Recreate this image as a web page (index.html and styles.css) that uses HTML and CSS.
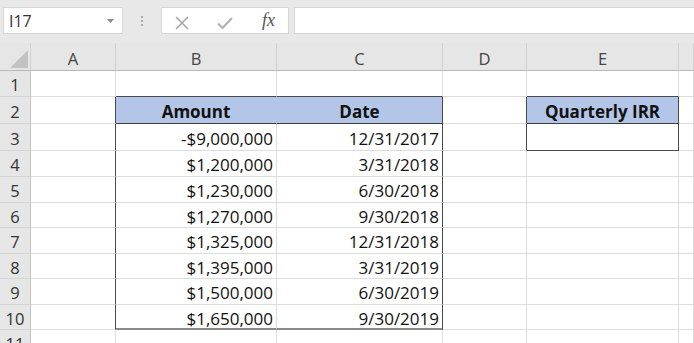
FILE: index.html
```html
<!DOCTYPE html>
<html>
<head>
<meta charset="utf-8">
<link rel="stylesheet" href="styles.css">
</head>
<body>
<div class="app">
  <div class="toolbar">
    <div class="namebox">
      <span class="ref">I17</span>
      <svg class="caret" width="7" height="4" viewBox="0 0 7 4"><path d="M0 0h7L3.5 4z" fill="#8a8a8a"/></svg>
    </div>
    <div class="grip"><i></i><i></i><i></i></div>
    <div class="fxbox">
      <svg class="ico" width="14" height="14" viewBox="0 0 14 14"><path d="M1 1L13 13M13 1L1 13" stroke="#a6a6a6" stroke-width="1.6" fill="none"/></svg>
      <svg class="ico" width="16" height="12" viewBox="0 0 16 12"><path d="M1 6.5L5.5 11L15 1" stroke="#b3b3b3" stroke-width="2.2" fill="none"/></svg>
      <span class="fx">fx</span>
    </div>
    <div class="formula"></div>
  </div>
  <div class="sheet">
    <div class="c corner"><svg width="18" height="18" viewBox="0 0 18 18"><path d="M18 0V18H0z" fill="#c2c2c2"/></svg></div>
    <div class="c hd">A</div><div class="c hd">B</div><div class="c hd">C</div><div class="c hd">D</div><div class="c hd">E</div><div class="c hd"></div>

    <div class="c rh">1</div><div class="c"></div><div class="c bb"></div><div class="c bb"></div><div class="c"></div><div class="c bb"></div><div class="c"></div>

    <div class="c rh">2</div><div class="c br"></div><div class="c th join">Amount</div><div class="c th br">Date</div><div class="c br"></div><div class="c th br">Quarterly IRR</div><div class="c"></div>

    <div class="c rh">3</div><div class="c br"></div><div class="c num">-$9,000,000</div><div class="c num br">12/31/2017</div><div class="c br"></div><div class="c br bb"></div><div class="c"></div>

    <div class="c rh">4</div><div class="c br"></div><div class="c num">$1,200,000</div><div class="c num br">3/31/2018</div><div class="c"></div><div class="c"></div><div class="c"></div>

    <div class="c rh">5</div><div class="c br"></div><div class="c num">$1,230,000</div><div class="c num br">6/30/2018</div><div class="c"></div><div class="c"></div><div class="c"></div>

    <div class="c rh">6</div><div class="c br"></div><div class="c num">$1,270,000</div><div class="c num br">9/30/2018</div><div class="c"></div><div class="c"></div><div class="c"></div>

    <div class="c rh">7</div><div class="c br"></div><div class="c num">$1,325,000</div><div class="c num br">12/31/2018</div><div class="c"></div><div class="c"></div><div class="c"></div>

    <div class="c rh">8</div><div class="c br"></div><div class="c num">$1,395,000</div><div class="c num br">3/31/2019</div><div class="c"></div><div class="c"></div><div class="c"></div>

    <div class="c rh">9</div><div class="c br"></div><div class="c num">$1,500,000</div><div class="c num br">6/30/2019</div><div class="c"></div><div class="c"></div><div class="c"></div>

    <div class="c rh">10</div><div class="c br"></div><div class="c num last">$1,650,000</div><div class="c num br last">9/30/2019</div><div class="c"></div><div class="c"></div><div class="c"></div>

    <div class="c rh">11</div><div class="c"></div><div class="c"></div><div class="c"></div><div class="c"></div><div class="c"></div><div class="c"></div>
  </div>
</div>
</body>
</html>
```

FILE: styles.css
```css
html, body {
  margin: 0;
  padding: 0;
  overflow: hidden;
  background: #ffffff;
}
.app {
  width: 694px;
  height: 343px;
  overflow: hidden;
  font-family: "Open Sans", "Noto Sans", sans-serif;
}
.toolbar {
  height: 43px;
  box-sizing: border-box;
  background: #e8e8e8;
  display: flex;
  align-items: flex-start;
  padding: 7px 0 0 3px;
}
.namebox {
  width: 120px;
  height: 27px;
  box-sizing: border-box;
  background: #fff;
  border: 1px solid #d6d6d6;
  display: flex;
  align-items: center;
  justify-content: space-between;
  padding: 0 8px 0 5px;
}
.ref {
  font-size: 16px;
  color: #333;
}
.caret { margin-top: 1px; }
.grip {
  width: 38px;
  height: 27px;
  display: flex;
  flex-direction: column;
  align-items: center;
  justify-content: center;
  gap: 2px;
}
.grip i {
  display: block;
  width: 2px;
  height: 2px;
  background: #a9a9a9;
}
.fxbox {
  width: 128px;
  height: 27px;
  box-sizing: border-box;
  background: #fff;
  border: 1px solid #d6d6d6;
  display: flex;
  align-items: center;
  padding-left: 13px;
  gap: 28px;
}
.ico { display: block; margin-top: 4px; }
.fx {
  font-family: "Liberation Serif", "DejaVu Serif", serif;
  font-style: italic;
  font-size: 18px;
  color: #555;
  margin-left: 1px;
}
.formula {
  flex: 1;
  height: 27px;
  margin-left: 5px;
  box-sizing: border-box;
  background: #fff;
  border: 1px solid #d6d6d6;
  border-right: none;
}
.sheet {
  display: grid;
  grid-template-columns: 31px 85px 161px 166px 84px 152px 1fr;
  grid-template-rows: 28px 26px 27px 27px 26px 26px 25px 26px 25px 26px 25px 26px;
}
.c {
  box-sizing: border-box;
  border-right: 1px solid #dcdcdc;
  border-bottom: 1px solid #dcdcdc;
  display: flex;
  align-items: center;
  padding: 2px 3px 0 3px;
  font-size: 17px;
  color: #111;
  white-space: nowrap;
  overflow: hidden;
}
.hd {
  background: #e6e6e6;
  justify-content: center;
  color: #444;
  font-size: 16.5px;
  border-right-color: #d2d2d2;
  border-bottom-color: #b8b8b8;
  padding-top: 3px;
}
.corner {
  background: #e6e6e6;
  border-right-color: #d2d2d2;
  border-bottom-color: #b8b8b8;
  justify-content: flex-end;
  align-items: flex-end;
  padding: 0 2px 2px 0;
}
.corner svg { display: block; }
.rh {
  background: #e6e6e6;
  justify-content: center;
  color: #333;
  font-size: 16.5px;
  border-right-color: #c4c4c4;
  border-bottom-color: #d4d4d4;
  padding: 2px 0 0 0;
}
.num { justify-content: flex-end; }
.th {
  background: #b4c6e7;
  font-weight: 700;
  justify-content: center;
  border-bottom-color: #3f3f3f;
}
.join { border-right-color: #b4c6e7; }
.br { border-right-color: #4a4a4a; }
.bb { border-bottom-color: #4a4a4a; }
.last {
  border-bottom: 2px solid #8a8a8a;
  padding-top: 3px;
}
```
